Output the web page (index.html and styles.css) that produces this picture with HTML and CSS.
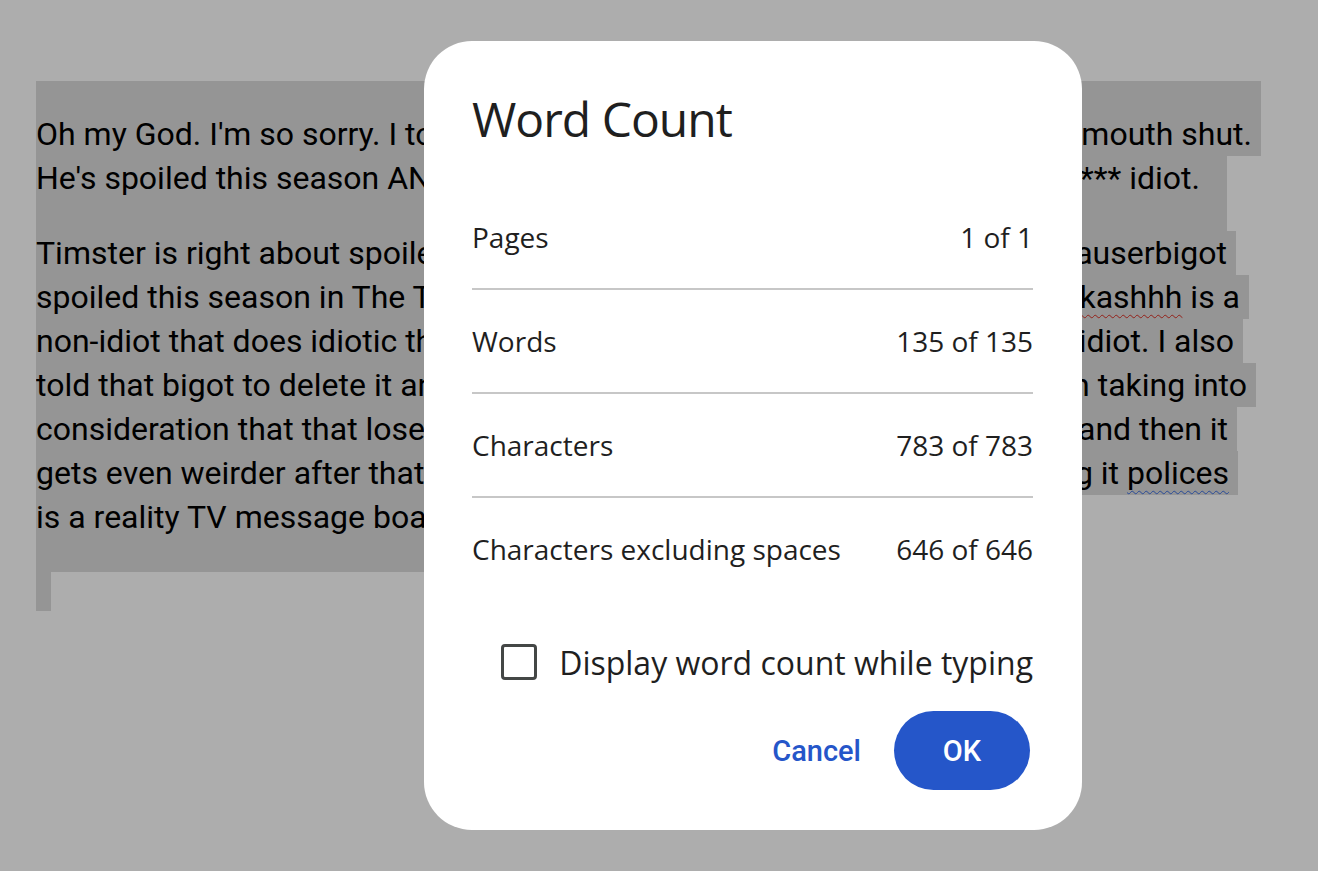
FILE: index.html
```html
<!DOCTYPE html>
<html lang="en">
<head>
  <meta charset="UTF-8">
  <title>Word Count</title>
  <link rel="stylesheet" href="styles.css">
</head>
<body>
  <div class="doc">
    <div class="para p1">
      <div class="ln ln-top w1"><span class="lt">Oh my God. I'm so sorry. I told him not to say a single word and keep his</span><span class="rt">to keep his mouth shut.</span></div>
      <div class="ln ln-end w2"><span class="lt">He's spoiled this season AND last season, and he keeps on being a f</span><span class="rt">being a f*** idiot.</span></div>
    </div>
    <div class="para p2">
      <div class="ln w3"><span class="lt">Timster is right about spoilers, and I'm not defending that thatsauserbigot</span><span class="rt">because thatsauserbigot</span></div>
      <div class="ln w4"><span class="lt">spoiled this season in The Traitors thread, and I do think Mrkashhh is a</span><span class="rt">but <span class="typo">Mrkashhh</span> is a</span></div>
      <div class="ln w5"><span class="lt">non-idiot that does idiotic things, which is different from being an idiot. I also</span><span class="rt">being an idiot. I also</span></div>
      <div class="ln w6"><span class="lt">told that bigot to delete it and it never got deleted, even when taking into</span><span class="rt">even when taking into</span></div>
      <div class="ln w7"><span class="lt">consideration that that loser was reported several times, and then it</span><span class="rt">times, and then it</span></div>
      <div class="ln w8"><span class="lt">gets even weirder after that, because I don't know what this thing it polices</span><span class="rt">considering it <span class="grammar">polices</span></span></div>
      <div class="ln ln-end ln-short"><span class="lt">is a reality TV message board.</span></div>
    </div>
    <div class="ln-empty"></div>
  </div>

  <div class="scrim"></div>

  <div class="dialog">
    <h2 class="title">Word Count</h2>
    <div class="stats">
      <div class="row"><span>Pages</span><span>1 of 1</span></div>
      <div class="row"><span>Words</span><span>135 of 135</span></div>
      <div class="row"><span>Characters</span><span>783 of 783</span></div>
      <div class="row"><span>Characters excluding spaces</span><span>646 of 646</span></div>
    </div>
    <label class="check">
      <span class="box"></span>
      <span>Display word count while typing</span>
    </label>
    <div class="actions">
      <button class="btn-text">Cancel</button>
      <button class="btn-ok">OK</button>
    </div>
  </div>
</body>
</html>
```

FILE: styles.css
```css
body {
  margin: 0;
  background: #fff;
  font-family: Roboto, "Liberation Sans", sans-serif;
  overflow: hidden;
}
.doc {
  padding: 81px 0 0 36px;
  font-size: 32px;
  line-height: 44px;
  color: #000;
}
.ln {
  display: flex;
  justify-content: space-between;
  background: #dcdcdc;
  white-space: nowrap;
}
.ln .lt {
  flex: 1;
  min-width: 0;
  overflow: hidden;
}
.ln .rt {
  flex: none;
  padding-right: 9px;
}
.ln-top {
  padding-top: 31px;
}
.ln-end {
  padding-bottom: 31px;
}
.ln-end .rt {
  padding-right: 27px;
}
.p2 .ln-end {
  padding-bottom: 33px;
}
.w1 { width: 1225px; }
.w2 { width: 1191px; }
.w3 { width: 1200px; }
.w4 { width: 1213px; }
.w5 { width: 1207px; }
.w6 { width: 1220px; }
.w7 { width: 1201px; }
.w8 { width: 1202px; }
.ln-short {
  width: max-content;
}
.ln-short .lt {
  padding-right: 27px;
}
.ln-empty {
  width: 15px;
  height: 39px;
  background: #dcdcdc;
}
.typo {
  text-decoration: underline wavy #d93025;
  text-decoration-thickness: 1px;
  text-underline-offset: 6px;
}
.grammar {
  text-decoration: underline wavy #3c6ee0;
  text-decoration-thickness: 1px;
  text-underline-offset: 6px;
}

.scrim {
  position: fixed;
  inset: 0;
  background: rgba(0, 0, 0, 0.32);
}

.dialog {
  position: fixed;
  left: 424px;
  top: 41px;
  width: 658px;
  box-sizing: border-box;
  padding: 48px 49px 40px 48px;
  background: #fff;
  border-radius: 48px;
  color: #1f1f1f;
  font-family: "Open Sans", sans-serif;
}
.title {
  margin: 0 0 37px;
  font-size: 48px;
  line-height: 60px;
  font-weight: 400;
  letter-spacing: -1px;
}
.row {
  display: flex;
  justify-content: space-between;
  align-items: center;
  height: 102px;
  font-size: 28px;
  border-bottom: 2px solid #c7c7c7;
}
.row:last-child {
  border-bottom: none;
}
.check {
  display: flex;
  justify-content: flex-end;
  align-items: center;
  gap: 22px;
  height: 48px;
  margin-top: 38px;
  font-size: 32px;
}
.box {
  width: 36px;
  height: 36px;
  box-sizing: border-box;
  border: 3px solid #444746;
  border-radius: 4px;
}
.actions {
  display: flex;
  justify-content: flex-end;
  align-items: center;
  gap: 20px;
  margin-top: 25px;
  margin-right: 3px;
}
.actions button {
  font-family: Roboto, "Liberation Sans", sans-serif;
  font-weight: 500;
  font-size: 29px;
  border: none;
  cursor: pointer;
}
.btn-text {
  background: none;
  color: #2556c9;
  padding: 0 13px;
  height: 79px;
}
.btn-ok {
  background: #2556c9;
  color: #fff;
  width: 136px;
  height: 79px;
  border-radius: 40px;
}
```
